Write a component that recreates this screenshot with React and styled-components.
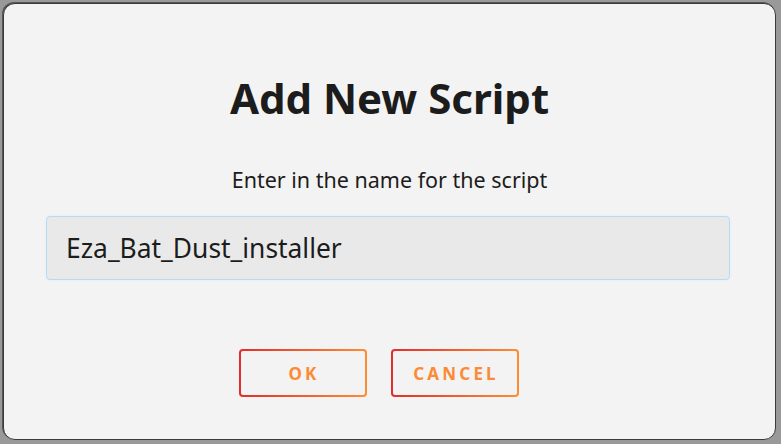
import styled, { createGlobalStyle } from "styled-components";

const GlobalStyle = createGlobalStyle`
  html, body {
    margin: 0;
    padding: 0;
    background: #999999;
  }
  body {
    font-family: "Noto Sans", "Open Sans", sans-serif;
  }
`;

const Screen = styled.div`
  width: 781px;
  height: 444px;
  padding: 3px 5px 4px 3px;
  box-sizing: border-box;
  display: flex;
`;

const Dialog = styled.div`
  flex: 1;
  background: #f3f3f3;
  border-radius: 12px;
  border: 1px solid #3a3a3a;
  border-width: 1px 1px 1px 1px;
  box-shadow: -1px -1px 0 0 #555555;
  display: flex;
  flex-direction: column;
  align-items: center;
  padding: 0 42px;
`;

const Title = styled.h1`
  margin: 66px 0 0;
  font-size: 42px;
  line-height: 56px;
  font-weight: 700;
  color: #1c1c1c;
`;

const Prompt = styled.p`
  margin: 41px 0 0;
  font-size: 21.5px;
  line-height: 26px;
  color: #1c1c1c;
`;

const NameInput = styled.input`
  margin-top: 23px;
  align-self: flex-start;
  width: calc(100% - 3px);
  height: 64px;
  box-sizing: border-box;
  padding: 0 19px;
  background: #e9e9e9;
  border: 1px solid #b5dcf3;
  border-radius: 4px;
  box-shadow: 0 0 2px #d6ecf9;
  font-family: inherit;
  font-size: 26.4px;
  color: #1c1c1c;
  outline: none;
`;

const Actions = styled.div`
  margin-top: 69px;
  display: flex;
  gap: 24px;
  padding-right: 22px;
`;

const Button = styled.button`
  width: 128px;
  height: 48px;
  border: 2px solid transparent;
  border-radius: 4px;
  background: linear-gradient(#f3f3f3, #f3f3f3) padding-box,
    linear-gradient(90deg, #e22d2d, #ff8d33) border-box;
  font-family: inherit;
  font-size: 17px;
  font-weight: 700;
  letter-spacing: 3.2px;
  padding: 0 0 0 3px;
  color: #fb8b36;
  cursor: pointer;
`;

export default function App() {
  return (
    <>
      <GlobalStyle />
      <Screen>
        <Dialog>
          <Title>Add New Script</Title>
          <Prompt>Enter in the name for the script</Prompt>
          <NameInput defaultValue="Eza_Bat_Dust_installer" />
          <Actions>
            <Button>OK</Button>
            <Button>CANCEL</Button>
          </Actions>
        </Dialog>
      </Screen>
    </>
  );
}
